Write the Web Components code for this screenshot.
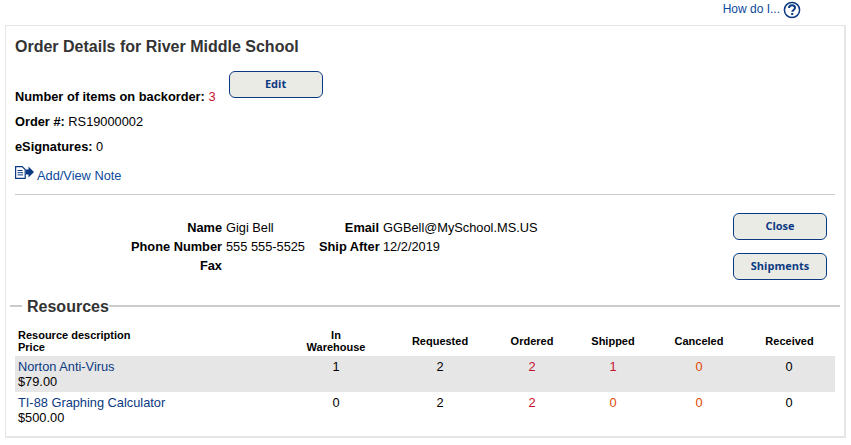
<!DOCTYPE html>
<html>
<head>
<meta charset="utf-8">
<style>
  html, body { margin: 0; padding: 0; background: #fff; }
  body { font: 12.8px "Liberation Sans", Arial, sans-serif; color: #000; }
</style>
</head>
<body>
<help-bar></help-bar>
<order-card>
  <order-summary></order-summary>
  <contact-panel></contact-panel>
  <resource-section>
    <resource-row name="Norton Anti-Virus" price="$79.00" shade values="1,2,2,1,0,0"></resource-row>
    <resource-row name="TI-88 Graphing Calculator" price="$500.00" values="0,2,2,0,0,0"></resource-row>
  </resource-section>
</order-card>

<script>
// Shared grid for the resource table, header and rows have to line up
const RESOURCE_COLUMNS = '272px 98px 110px 74px 88px 84px 94px';

// Rounded grey button used for Edit, Close and Shipments
class ActionButton extends HTMLElement {
    constructor() {
        super();
        this.attachShadow({ mode: 'open' });
        this.shadowRoot.innerHTML = `
            <style>
                :host { display: block; flex: none; width: 94px; height: 27px; }
                button {
                    width: 100%;
                    height: 100%;
                    padding: 0 0 2px;
                    box-sizing: border-box;
                    background: #ebebe6;
                    border: 1px solid #0b3a83;
                    border-radius: 6px;
                    color: #0b3a83;
                    font: bold 11px "Open Sans", sans-serif;
                }
            </style>
            <button><slot></slot></button>
        `;
    }
}

class HelpBar extends HTMLElement {
    constructor() {
        super();
        this.attachShadow({ mode: 'open' });
        this.shadowRoot.innerHTML = `
            <style>
                :host {
                    display: flex;
                    justify-content: flex-end;
                    align-items: center;
                    gap: 3px;
                    height: 19px;
                    padding: 0 50px 6px 0;
                    color: #0b4a9c;
                    font-size: 12px;
                }
                span { margin-top: -1px; }
                svg { display: block; }
            </style>
            <span>How do I...</span>
            <svg width="18" height="18" viewBox="0 0 18 18">
                <circle cx="9" cy="9" r="7.6" fill="#fff" stroke="#0b3a83" stroke-width="1.5"/>
                <path d="M6 7.1c0-1.8 1.3-2.8 3.1-2.8s2.9 1 2.9 2.5c0 1.2-.7 1.7-1.5 2.3-.8 .5-1.2 .9-1.2 1.7" fill="none" stroke="#0b3a83" stroke-width="2"/>
                <rect x="8.2" y="12" width="2" height="2" fill="#0b3a83"/>
            </svg>
        `;
    }
}

class OrderCard extends HTMLElement {
    constructor() {
        super();
        this.attachShadow({ mode: 'open' });
        this.shadowRoot.innerHTML = `
            <style>
                :host {
                    display: block;
                    box-sizing: border-box;
                    width: 841px;
                    height: 413px;
                    margin-left: 5px;
                    border: 1px solid #e6e6e6;
                    border-width: 1px 2px 2px 1px;
                }
            </style>
            <slot></slot>
        `;
    }
}

class OrderSummary extends HTMLElement {
    constructor() {
        super();
        this.attachShadow({ mode: 'open' });
        this.shadowRoot.innerHTML = `
            <style>
                :host {
                    display: block;
                    margin: 0 9px 0 9px;
                    padding-top: 11px;
                    height: 157px;
                    box-sizing: content-box;
                    border-bottom: 1px solid #ccc;
                }
                h1 { margin: 0; font-size: 16px; line-height: 19px; font-weight: bold; color: #333; }
                .backorder { display: flex; align-items: flex-start; gap: 13px; margin-top: 15px; height: 33px; }
                .backorder p { margin: 19px 0 0; }
                p { margin: 0; line-height: 14px; }
                b { font-weight: bold; }
                .red { color: #c8102e; }
                .order { margin-top: 11px; }
                .esig { margin-top: 11px; }
                .note { display: flex; align-items: flex-end; gap: 3px; margin-top: 12px; color: #0b4a9c; line-height: 15px; }
                svg { display: block; margin-bottom: 4px; }
            </style>
            <h1>Order Details for River Middle School</h1>
            <div class="backorder">
                <p><b>Number of items on backorder:</b> <span class="red">3</span></p>
                <action-button>Edit</action-button>
            </div>
            <p class="order"><b>Order #:</b> RS19000002</p>
            <p class="esig"><b>eSignatures:</b> 0</p>
            <div class="note">
                <svg width="19" height="13" viewBox="0 0 19 13">
                    <path d="M.6 .6h6.6l3 3v8.8H.6z" fill="#fff" stroke="#0b3a83" stroke-width="1.2"/>
                    <path d="M2.5 4.5h5M2.5 6.7h5.5M2.5 8.9h5.5" stroke="#0b3a83" stroke-width="1"/>
                    <path d="M11 3.4h2.5V.6L19 6l-5.5 5.4V8.6H11z" fill="#0b3a83"/>
                </svg>
                <span>Add/View Note</span>
            </div>
        `;
    }
}

class ContactPanel extends HTMLElement {
    constructor() {
        super();
        this.attachShadow({ mode: 'open' });
        this.shadowRoot.innerHTML = `
            <style>
                :host {
                    display: flex;
                    justify-content: space-between;
                    height: 101px;
                    padding: 18px 17px 0 0;
                    box-sizing: border-box;
                }
                .info {
                    display: grid;
                    grid-template-columns: 216px 89px 60px auto;
                    grid-auto-rows: 19px;
                    column-gap: 4px;
                    margin-top: 7px;
                    align-content: start;
                    white-space: nowrap;
                }
                .info b { text-align: right; }
                .buttons { display: flex; flex-direction: column; gap: 13px; }
            </style>
            <div class="info">
                <b>Name</b><span>Gigi Bell</span><b>Email</b><span>GGBell@MySchool.MS.US</span>
                <b>Phone Number</b><span>555 555-5525</span><b>Ship After</b><span>12/2/2019</span>
                <b>Fax</b><span></span><span></span><span></span>
            </div>
            <div class="buttons">
                <action-button>Close</action-button>
                <action-button>Shipments</action-button>
            </div>
        `;
    }
}

class ResourceSection extends HTMLElement {
    constructor() {
        super();
        this.attachShadow({ mode: 'open' });
        this.shadowRoot.innerHTML = `
            <style>
                :host { display: block; margin: 0 5px 0 4px; }
                fieldset {
                    margin: 0;
                    padding: 0 5px 0 5px;
                    border: 0;
                    border-top: 2px solid #ccc;
                }
                legend {
                    margin-left: 7px;
                    padding: 2px 0 0 5px;
                    font-size: 16px;
                    font-weight: bold;
                    line-height: 18px;
                    color: #333;
                }
                .head {
                    display: grid;
                    grid-template-columns: ${RESOURCE_COLUMNS};
                    align-items: center;
                    margin-top: 11px;
                    height: 28px;
                    padding-bottom: 1px;
                    font-size: 11px;
                    font-weight: bold;
                    line-height: 12px;
                }
                .head span { text-align: center; }
                .head span:first-child { text-align: left; padding-left: 3px; }
                .head span:last-child { padding-left: 3px; }
            </style>
            <fieldset>
                <legend>Resources</legend>
                <div class="head">
                    <span>Resource description<br>Price</span>
                    <span>In<br>Warehouse</span>
                    <span>Requested</span>
                    <span>Ordered</span>
                    <span>Shipped</span>
                    <span>Canceled</span>
                    <span>Received</span>
                </div>
                <slot></slot>
            </fieldset>
        `;
    }
}

class ResourceRow extends HTMLElement {
    constructor() {
        super();
        this.attachShadow({ mode: 'open' });
    }

    connectedCallback() {
        this.render();
    }

    render() {
        const values = this.getAttribute('values').split(',');
        // Colours per column: warehouse, requested, ordered, shipped, canceled, received
        const tones = ['#000', '#000', '#c8102e', values[3] === '1' ? '#c8102e' : '#e04a00', '#e04a00', '#000'];

        const cells = values.map((v, i) => `<span class="num" style="color:${tones[i]}">${v}</span>`).join('');

        this.shadowRoot.innerHTML = `
            <style>
                :host {
                    display: grid;
                    grid-template-columns: ${RESOURCE_COLUMNS};
                    height: 36px;
                    background: ${this.hasAttribute('shade') ? '#e6e6e6' : 'transparent'};
                }
                .name { padding: 3px 0 0 3px; line-height: 15px; white-space: nowrap; }
                .name a { display: block; color: #0b3a83; }
                .num { text-align: center; padding-top: 4px; line-height: 14px; }
                .num:last-child { padding-left: 2px; }
            </style>
            <div class="name">
                <a>${this.getAttribute('name')}</a>
                <span>${this.getAttribute('price')}</span>
            </div>
            ${cells}
        `;
    }
}

customElements.define('action-button', ActionButton);
customElements.define('help-bar', HelpBar);
customElements.define('order-card', OrderCard);
customElements.define('order-summary', OrderSummary);
customElements.define('contact-panel', ContactPanel);
customElements.define('resource-section', ResourceSection);
customElements.define('resource-row', ResourceRow);
</script>
</body>
</html>
